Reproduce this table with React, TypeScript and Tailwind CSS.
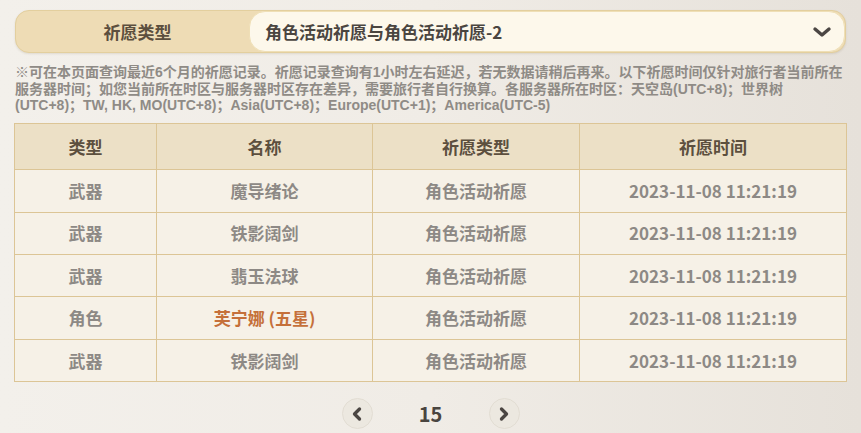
import { ChevronLeft, ChevronRight } from "lucide-react";

const rows = [
  { kind: "武器", name: "魔导绪论", pool: "角色活动祈愿", time: "2023-11-08 11:21:19" },
  { kind: "武器", name: "铁影阔剑", pool: "角色活动祈愿", time: "2023-11-08 11:21:19" },
  { kind: "武器", name: "翡玉法球", pool: "角色活动祈愿", time: "2023-11-08 11:21:19" },
  { kind: "角色", name: "芙宁娜 (五星)", pool: "角色活动祈愿", time: "2023-11-08 11:21:19", star: true },
  { kind: "武器", name: "铁影阔剑", pool: "角色活动祈愿", time: "2023-11-08 11:21:19" },
];

const font = "font-['Noto_Sans_CJK_SC','Noto_Sans',sans-serif]";

export default function App() {
  return (
    <div
      className={`h-[433px] w-[861px] overflow-hidden bg-gradient-to-r from-[#f3f0eb] via-[#f0ece6] to-[#e6e1da] ${font} font-bold`}
    >
      <div className="px-[15px] pt-[10px]">
        {/* select */}
        <div className="flex h-[43px] items-stretch rounded-[14px] border border-[#e3cf9e] bg-[#eedcb5] shadow-[0_1px_2px_rgba(120,100,60,0.15)]">
          <div className="flex w-[233px] items-center justify-center pl-[10px] text-[17px] text-[#5c4f3e]">
            祈愿类型
          </div>
          <div className="flex flex-1 items-center justify-between rounded-[16px] border border-[#efdfb6] bg-[#fdf8eb] pl-[15px] pr-[14px]">
            <span className="text-[17px] text-[#4a4540]">角色活动祈愿与角色活动祈愿-2</span>
            <svg width="20" height="12" viewBox="0 0 20 12" className="-mr-[2px]">
              <path
                d="M3 3 L10 9 L17 3"
                fill="none"
                stroke="#4b4643"
                strokeWidth="3.4"
                strokeLinecap="round"
                strokeLinejoin="round"
              />
            </svg>
          </div>
        </div>

        {/* note */}
        <div className="mt-[11px] font-['Liberation_Sans','Noto_Sans_CJK_SC',sans-serif] text-[14px] leading-[16.7px] text-[#8f8b86]">
          <div className="whitespace-nowrap">
            ※可在本页面查询最近6个月的祈愿记录。祈愿记录查询有1小时左右延迟，若无数据请稍后再来。以下祈愿时间仅针对旅行者当前所在
          </div>
          <div className="whitespace-nowrap">
            服务器时间；如您当前所在时区与服务器时区存在差异，需要旅行者自行换算。各服务器所在时区：天空岛(UTC+8)；世界树
          </div>
          <div className="whitespace-nowrap">
            (UTC+8)；TW, HK, MO(UTC+8)；Asia(UTC+8)；Europe(UTC+1)；America(UTC-5)
          </div>
        </div>
      </div>

      {/* table */}
      <div className="ml-[14px] mt-[9px] w-[833px]">
        <table className="w-full table-fixed border-collapse text-center text-[17px]">
          <colgroup>
            <col className="w-[142px]" />
            <col className="w-[216px]" />
            <col className="w-[207px]" />
            <col />
          </colgroup>
          <thead>
            <tr className="h-[46px] bg-[#ece0c6] text-[#5c4f3e]">
              <th className="border border-[#dcc596] font-bold">类型</th>
              <th className="border border-[#dcc596] font-bold">名称</th>
              <th className="border border-[#dcc596] font-bold">祈愿类型</th>
              <th className="border border-[#dcc596] font-bold">祈愿时间</th>
            </tr>
          </thead>
          <tbody className="bg-[#f6f1e7] text-[#8d8985]">
            {rows.map((r, i) => (
              <tr key={i} className="h-[42.4px]">
                <td className="border border-[#dcc596]">{r.kind}</td>
                <td className={`border border-[#dcc596] ${r.star ? "text-[#c5703a]" : ""}`}>{r.name}</td>
                <td className="border border-[#dcc596]">{r.pool}</td>
                <td className="border border-[#dcc596] text-[17px]">{r.time}</td>
              </tr>
            ))}
          </tbody>
        </table>
      </div>

      {/* pagination */}
      <div className="mt-[16px] flex items-center justify-center gap-[43px]">
        <button className="flex size-[31px] items-center justify-center rounded-full border border-[#e2ddd3] bg-[#ece8e0]">
          <ChevronLeft className="size-[20px] text-[#4b4643]" strokeWidth={4} />
        </button>
        <span className="w-[30px] text-center text-[20px] text-[#4a4540]">15</span>
        <button className="flex size-[31px] items-center justify-center rounded-full border border-[#e2ddd3] bg-[#ece8e0]">
          <ChevronRight className="size-[20px] text-[#4b4643]" strokeWidth={4} />
        </button>
      </div>
    </div>
  );
}
